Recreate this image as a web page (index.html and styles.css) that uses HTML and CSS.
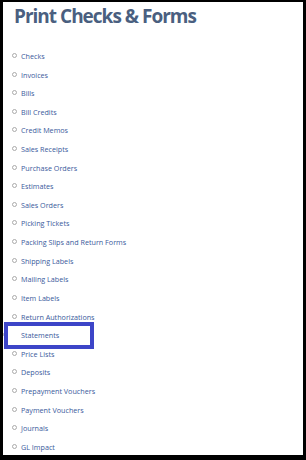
FILE: index.html
```html
<!DOCTYPE html>
<html lang="en">
<head>
    <meta charset="UTF-8">
    <title>Print Checks &amp; Forms</title>
    <link rel="stylesheet" href="styles.css">
</head>
<body>
    <div class="page">
        <h1>Print Checks &amp; Forms</h1>
        <ul class="forms">
            <li><a href="#">Checks</a></li>
            <li><a href="#">Invoices</a></li>
            <li><a href="#">Bills</a></li>
            <li><a href="#">Bill Credits</a></li>
            <li><a href="#">Credit Memos</a></li>
            <li><a href="#">Sales Receipts</a></li>
            <li><a href="#">Purchase Orders</a></li>
            <li><a href="#">Estimates</a></li>
            <li><a href="#">Sales Orders</a></li>
            <li><a href="#">Picking Tickets</a></li>
            <li><a href="#">Packing Slips and Return Forms</a></li>
            <li><a href="#">Shipping Labels</a></li>
            <li><a href="#">Mailing Labels</a></li>
            <li><a href="#">Item Labels</a></li>
            <li><a href="#">Return Authorizations</a></li>
            <li class="highlight"><a href="#">Statements</a></li>
            <li><a href="#">Price Lists</a></li>
            <li><a href="#">Deposits</a></li>
            <li><a href="#">Prepayment Vouchers</a></li>
            <li><a href="#">Payment Vouchers</a></li>
            <li><a href="#">Journals</a></li>
            <li><a href="#">GL Impact</a></li>
        </ul>
    </div>
</body>
</html>
```

FILE: styles.css
```css
body {
    margin: 0;
    background-color: #000;
    font-family: 'Open Sans', sans-serif;
}
.page {
    margin: 2px 3px 5px 3px;
    height: 453px;
    background-color: #fff;
    overflow: hidden;
}
h1 {
    margin: 0;
    padding: 2px 0 0 11px;
    font-size: 19px;
    line-height: 24px;
    letter-spacing: -1px;
    font-weight: 700;
    color: #4a5f80;
}
.forms {
    list-style: none;
    margin: 0;
    padding: 19px 0 0 18px;
}
.forms li {
    position: relative;
    font-size: 7.2px;
    line-height: 18.62px;
    height: 18.62px;
}
.forms li::before {
    content: "";
    position: absolute;
    left: -9px;
    top: 6px;
    width: 3px;
    height: 3px;
    border: 1px solid #aaa;
    border-radius: 50%;
}
.forms a {
    color: #3a5a9c;
    text-decoration: none;
}
.forms li.highlight {
    width: 82px;
    margin-left: -13px;
    padding-left: 13px;
    box-sizing: border-box;
    outline: 4px solid #3d45c8;
}
```
